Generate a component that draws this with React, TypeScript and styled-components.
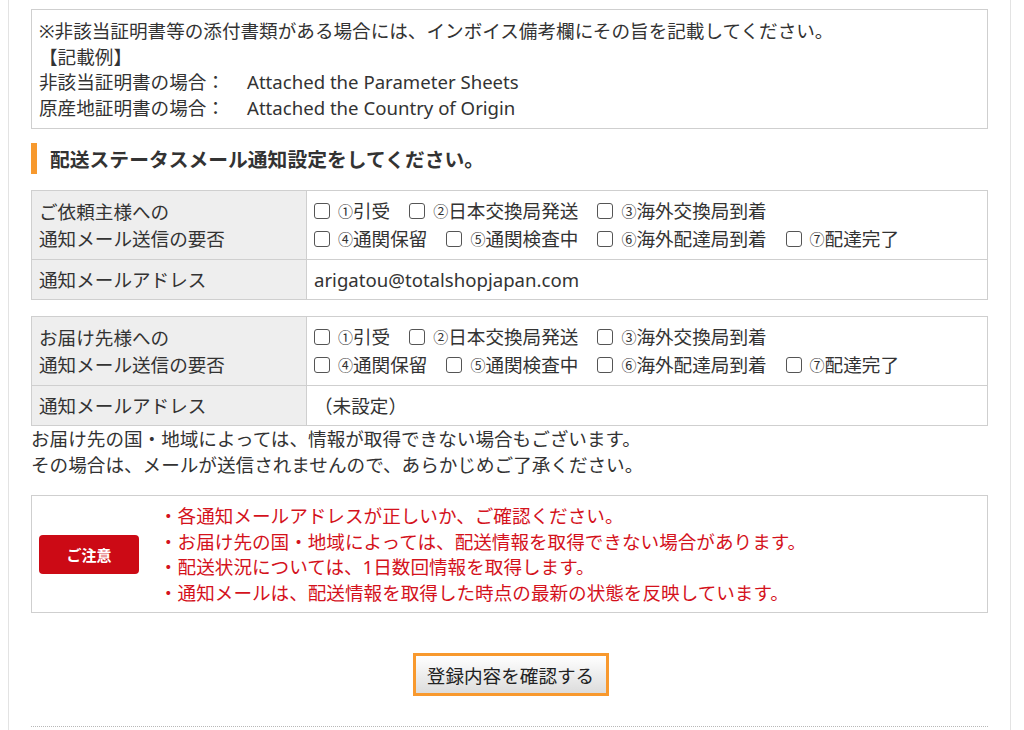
import styled, { createGlobalStyle } from "styled-components";

const GlobalStyle = createGlobalStyle`
  html, body {
    margin: 0;
    padding: 0;
    background: #fff;
  }
  body {
    font-family: "Noto Sans", "Noto Sans CJK JP", sans-serif;
    color: #333;
    font-size: 18.6px;
  }
`;

const S = {
  Page: styled.div`
    margin: 0 13px 0 8px;
    border-left: 1px solid #e3e3e3;
    border-right: 1px solid #e3e3e3;
    padding: 9px 22px 4px;
    min-height: 100vh;
    box-sizing: border-box;
  `,
  NoteBox: styled.div`
    border: 1px solid #cfcfcf;
    padding: 8px 7px 8px;
    line-height: 25.5px;
  `,
  NoteRow: styled.div`
    display: flex;
  `,
  NoteLabel: styled.span`
    width: 208px;
    flex: none;
  `,
  Heading: styled.h2`
    margin: 14px 0 16px;
    height: 31px;
    display: flex;
    align-items: center;
    border-left: 6px solid #f7992e;
    padding-left: 13px;
    font-size: 19.8px;
    font-weight: 700;
    color: #333;
  `,
  Table: styled.table`
    width: 100%;
    border-collapse: collapse;
    margin-bottom: 16px;
  `,
  Label: styled.th`
    width: 260px;
    background: #eeeeee;
    border: 1px solid #cfcfcf;
    text-align: left;
    font-weight: 400;
    padding: 6px 7px;
    line-height: 27px;
    vertical-align: middle;
  `,
  Value: styled.td`
    border: 1px solid #cfcfcf;
    padding: 6px 7px;
    line-height: 26px;
  `,
  CheckLine: styled.div`
    display: flex;
    flex-wrap: wrap;
    height: 28px;
    align-items: center;
  `,
  CheckItem: styled.label`
    display: inline-flex;
    align-items: center;
    margin-right: 19px;
    white-space: nowrap;
  `,
  Box: styled.span`
    width: 14px;
    height: 14px;
    border: 1px solid #555;
    border-radius: 3px;
    margin-right: 8px;
    background: #fff;
  `,
  Num: styled.span`
    font-size: 15px;
  `,
  Info: styled.p`
    margin: -16px 0 17px;
    line-height: 26px;
  `,
  Caution: styled.div`
    border: 1px solid #cfcfcf;
    display: flex;
    align-items: center;
    padding: 7px 7px;
  `,
  Badge: styled.div`
    width: 100px;
    height: 39px;
    border-radius: 4px;
    background: #cc0a15;
    color: #fff;
    font-size: 15px;
    font-weight: 700;
    display: flex;
    align-items: center;
    justify-content: center;
    flex: none;
    margin-right: 20px;
  `,
  RedList: styled.div`
    color: #d4121c;
    line-height: 25.5px;
  `,
  ButtonRow: styled.div`
    display: flex;
    justify-content: center;
    padding: 40px 0 30px;
  `,
  Button: styled.button`
    width: 196px;
    height: 43px;
    border: 3px solid #f8992e;
    background: linear-gradient(#ffffff, #dcdcdc);
    font-family: inherit;
    font-size: 18.6px;
    color: #222;
    padding: 0;
    margin-left: 2px;
  `,
  Divider: styled.div`
    border-top: 1px dotted #b8b8b8;
  `,
};

const steps1 = [
  ["①", "引受"],
  ["②", "日本交換局発送"],
  ["③", "海外交換局到着"],
];
const steps2 = [
  ["④", "通関保留"],
  ["⑤", "通関検査中"],
  ["⑥", "海外配達局到着"],
  ["⑦", "配達完了"],
];

const CheckGroup = () => (
  <>
    {[steps1, steps2].map((line, i) => (
      <S.CheckLine key={i}>
        {line.map(([n, t]) => (
          <S.CheckItem key={n}>
            <S.Box />
            <S.Num>{n}</S.Num>
            {t}
          </S.CheckItem>
        ))}
      </S.CheckLine>
    ))}
  </>
);

type NotifyTableProps = {
  who: string;
  address: string;
};

const NotifyTable = ({ who, address }: NotifyTableProps) => (
  <S.Table>
    <tbody>
      <tr>
        <S.Label>
          {who}
          <br />
          通知メール送信の要否
        </S.Label>
        <S.Value>
          <CheckGroup />
        </S.Value>
      </tr>
      <tr>
        <S.Label>通知メールアドレス</S.Label>
        <S.Value>{address}</S.Value>
      </tr>
    </tbody>
  </S.Table>
);

export default function App() {
  return (
    <>
      <GlobalStyle />
      <S.Page>
        <S.NoteBox>
          <div>
            ※非該当証明書等の添付書類がある場合には、インボイス備考欄にその旨を記載してください。
          </div>
          <div>【記載例】</div>
          <S.NoteRow>
            <S.NoteLabel>非該当証明書の場合：</S.NoteLabel>
            Attached the Parameter Sheets
          </S.NoteRow>
          <S.NoteRow>
            <S.NoteLabel>原産地証明書の場合：</S.NoteLabel>
            Attached the Country of Origin
          </S.NoteRow>
        </S.NoteBox>

        <S.Heading>配送ステータスメール通知設定をしてください。</S.Heading>

        <NotifyTable who="ご依頼主様への" address="arigatou@totalshopjapan.com" />
        <NotifyTable who="お届け先様への" address="（未設定）" />

        <S.Info>
          お届け先の国・地域によっては、情報が取得できない場合もございます。
          <br />
          その場合は、メールが送信されませんので、あらかじめご了承ください。
        </S.Info>

        <S.Caution>
          <S.Badge>ご注意</S.Badge>
          <S.RedList>
            <div>・各通知メールアドレスが正しいか、ご確認ください。</div>
            <div>・お届け先の国・地域によっては、配送情報を取得できない場合があります。</div>
            <div>・配送状況については、1日数回情報を取得します。</div>
            <div>・通知メールは、配送情報を取得した時点の最新の状態を反映しています。</div>
          </S.RedList>
        </S.Caution>

        <S.ButtonRow>
          <S.Button type="button">登録内容を確認する</S.Button>
        </S.ButtonRow>
        <S.Divider />
      </S.Page>
    </>
  );
}
